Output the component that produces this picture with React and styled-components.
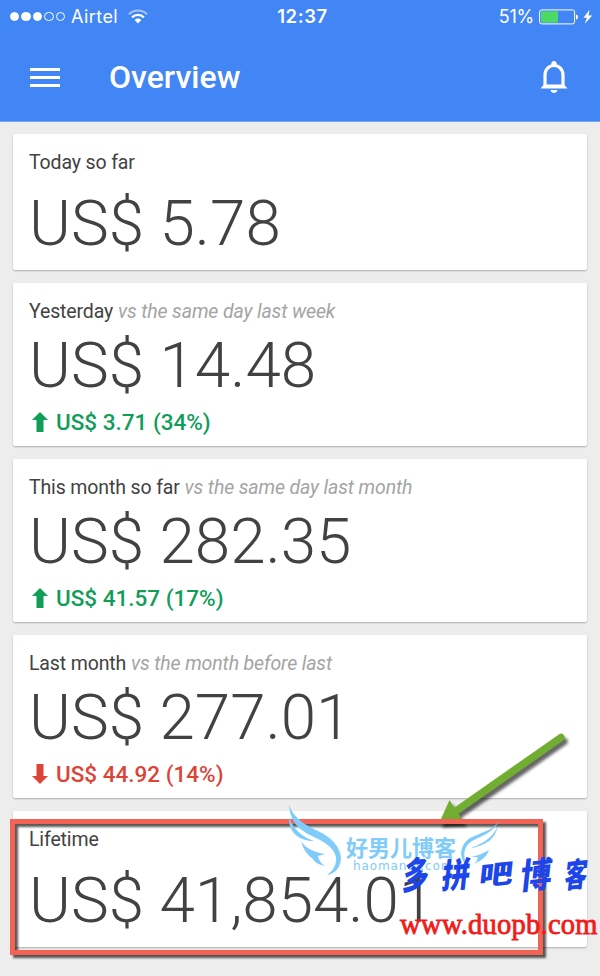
import React from 'react';
import styled, { createGlobalStyle } from 'styled-components';

const GlobalStyle = createGlobalStyle`
  * {
    box-sizing: border-box;
  }

  body {
    margin: 0;
    background: #ededed;
    font-family: Roboto, 'Noto Sans CJK SC', sans-serif;
    color: #424242;
  }
`;

const Screen = styled.div`
  position: relative;
  width: 600px;
  height: 976px;
  overflow: hidden;
  background: #ededed;
`;

const Header = styled.header`
  height: 122px;
  background: #4285f4;
  border-bottom: 1px solid #78a7f4;
  color: #fff;
`;

const StatusBar = styled.div`
  display: grid;
  grid-template-columns: 1fr auto 1fr;
  align-items: center;
  height: 33px;
  padding: 0 7px 0 10px;
  font: 400 18px/33px Inter, sans-serif;
`;

const StatusGroup = styled.div`
  display: flex;
  align-items: center;
  justify-content: ${(props) => (props.$end ? 'flex-end' : 'flex-start')};
`;

const Signal = styled.div`
  display: flex;
  gap: 2px;
  margin-right: 6px;
`;

const SignalDot = styled.span`
  width: 9.4px;
  height: 9.4px;
  border: 1px solid #fff;
  border-radius: 50%;
  background: ${(props) => (props.$filled ? '#fff' : 'transparent')};
`;

const Carrier = styled.span`
  margin-right: 10px;
  letter-spacing: 0.45px;
`;

const Clock = styled.span`
  margin-left: 2px;
  font-size: 18.5px;
  font-weight: 600;
  letter-spacing: 0.6px;
`;

const Percent = styled.span`
  margin-right: 5px;
  letter-spacing: -0.2px;
`;

const AppBar = styled.div`
  display: flex;
  align-items: center;
  height: 88px;
  padding: 0 32px 0 30px;
`;

const MenuIcon = styled.div`
  display: flex;
  flex-direction: column;
  gap: 5px;
  width: 30px;
  margin-right: 49px;
`;

const MenuLine = styled.span`
  height: 3px;
  background: #fff;
`;

const PageTitle = styled.h1`
  flex: 1;
  margin: 0 0 1px;
  font-size: 32px;
  font-weight: 500;
  line-height: 40px;
`;

const CardList = styled.main`
  display: flex;
  flex-direction: column;
  gap: 13px;
  padding: 12px 13px;
`;

const Card = styled.section`
  height: ${(props) => (props.$compact ? 136 : 163)}px;
  padding: 16.5px 16px 0;
  border-radius: 2px;
  background: #fff;
  box-shadow: 0 1px 2px rgba(0, 0, 0, 0.28);
`;

const CardTitle = styled.h2`
  margin: 0;
  font-size: 19.5px;
  font-weight: 400;
  line-height: 24px;
  letter-spacing: -0.13px;
  white-space: nowrap;
`;

const Comparison = styled.em`
  color: #a4a4a4;
`;

const Amount = styled.div`
  margin-top: ${(props) => (props.$compact ? 13.5 : 6.5)}px;
  font-size: 63.7px;
  font-weight: 300;
  line-height: 72px;
  white-space: nowrap;
`;

const Change = styled.div`
  display: flex;
  align-items: center;
  gap: 8px;
  margin: 7px 0 0 3px;
  color: ${(props) => (props.$down ? '#db4437' : '#0f9d58')};
  font-size: 22.5px;
  font-weight: 500;
  line-height: 26px;
`;

const ArrowIcon = styled.svg`
  width: 16px;
  height: 20px;
  transform: ${(props) => (props.$down ? 'rotate(180deg)' : 'none')};
`;

const Highlight = styled.div`
  position: absolute;
  left: 10px;
  top: 819px;
  width: 533px;
  height: 136px;
  border: 5px solid #f26255;
  filter: drop-shadow(3px 3px 1px rgba(0, 0, 0, 0.65));
`;

const Pointer = styled.svg`
  position: absolute;
  left: 420px;
  top: 720px;
  filter: drop-shadow(3px 4px 1.5px rgba(0, 0, 0, 0.6));
`;

const Wings = styled.svg`
  position: absolute;
  left: 280px;
  top: 795px;
`;

const Stamp = styled.div`
  position: absolute;
  left: 346px;
  top: 832px;
  width: 116px;
  color: #7fccfb;
  font: 700 22px/28px 'Noto Sans CJK SC', sans-serif;
  white-space: nowrap;
`;

const StampUrl = styled.div`
  margin-left: 7px;
  font: 400 12px/12px 'DejaVu Sans', sans-serif;
  letter-spacing: 0.9px;
`;

const BrushName = styled.div`
  position: absolute;
  left: 401px;
  top: 851px;
  display: flex;
  color: #1c45ea;
  font: 900 31px/44px 'Noto Sans CJK SC', sans-serif;
`;

const BrushChar = styled.span`
  width: 40px;
  transform: skewX(-12deg) rotate(-6deg)
    scale(${(props) => props.$wide}, ${(props) => props.$tall});
  transform-origin: 15px 50%;
`;

const SiteUrl = styled.div`
  position: absolute;
  left: 400px;
  top: 909px;
  color: #f11b1b;
  font: 400 28.5px/32px 'Liberation Serif', serif;
  letter-spacing: 0.25px;
  -webkit-text-stroke: 0.8px #f11b1b;
  white-space: nowrap;
`;

const cards = [
  { title: 'Today so far', amount: 'US$ 5.78' },
  {
    title: 'Yesterday',
    versus: 'vs the same day last week',
    amount: 'US$ 14.48',
    change: 'US$ 3.71 (34%)',
  },
  {
    title: 'This month so far',
    versus: 'vs the same day last month',
    amount: 'US$ 282.35',
    change: 'US$ 41.57 (17%)',
  },
  {
    title: 'Last month',
    versus: 'vs the month before last',
    amount: 'US$ 277.01',
    change: 'US$ 44.92 (14%)',
    down: true,
  },
  { title: 'Lifetime', amount: 'US$ 41,854.01' },
];

const brushChars = [
  { char: '多', wide: 0.82, tall: 1.2 },
  { char: '拼', wide: 0.9, tall: 1.12 },
  { char: '吧', wide: 1.08, tall: 0.86 },
  { char: '博', wide: 1, tall: 1.15 },
  { char: '客', wide: 0.72, tall: 1.08 },
];

function WifiIcon() {
  return (
    <svg width="20" height="15" viewBox="0 0 20 15" fill="none">
      <path d="M1 5.2a12.8 12.8 0 0 1 18 0" stroke="#a5c5fa" strokeWidth="2.2" />
      <path d="M4.1 8.4a8.3 8.3 0 0 1 11.8 0" stroke="#fff" strokeWidth="2.3" />
      <path d="M6.6 11a4.8 4.8 0 0 1 6.8 0L10 14.5z" fill="#fff" />
    </svg>
  );
}

function BatteryIcon() {
  return (
    <svg width="54" height="16" viewBox="0 0 54 16" fill="none">
      <rect x="0.6" y="0.9" width="35" height="14" rx="2" stroke="#fff" />
      <rect x="2" y="2.3" width="17" height="11.3" fill="#4cd964" />
      <path d="M37 5.5q2 0 2 2.5t-2 2.5z" fill="#fff" />
      <path d="M50.5 .8 44.5 8.7h3.4l-2.1 6 7.5-8.2h-3.8z" fill="#fff" />
    </svg>
  );
}

function BellIcon() {
  return (
    <svg width="28" height="34" viewBox="0 0 28 34" fill="none">
      <circle cx="14" cy="3.5" r="2.6" fill="#fff" />
      <path
        d="M5 27V15.2C5 9.5 9 5.5 14 5.5s9 4 9 9.7V27"
        stroke="#fff"
        strokeWidth="3.2"
      />
      <path d="M4 24.5h20l3.5 4H.5zM10.5 30h7q-.8 3-3.5 3t-3.5-3z" fill="#fff" />
    </svg>
  );
}

export default function App() {
  return (
    <Screen>
      <GlobalStyle />
      <Header>
        <StatusBar>
          <StatusGroup>
            <Signal>
              {[1, 2, 3, 4, 5].map((dot) => (
                <SignalDot key={dot} $filled={dot <= 3} />
              ))}
            </Signal>
            <Carrier>Airtel</Carrier>
            <WifiIcon />
          </StatusGroup>
          <Clock>12:37</Clock>
          <StatusGroup $end>
            <Percent>51%</Percent>
            <BatteryIcon />
          </StatusGroup>
        </StatusBar>
        <AppBar>
          <MenuIcon>
            <MenuLine />
            <MenuLine />
            <MenuLine />
          </MenuIcon>
          <PageTitle>Overview</PageTitle>
          <BellIcon />
        </AppBar>
      </Header>
      <CardList>
        {cards.map((card) => (
          <Card key={card.title} $compact={!card.change}>
            <CardTitle>
              {card.title} {card.versus && <Comparison>{card.versus}</Comparison>}
            </CardTitle>
            <Amount $compact={!card.change}>{card.amount}</Amount>
            {card.change && (
              <Change $down={card.down}>
                <ArrowIcon $down={card.down} viewBox="0 0 16 20">
                  <path d="M8 0l8 8h-4.5v12h-7V8H0z" fill="currentColor" />
                </ArrowIcon>
                {card.change}
              </Change>
            )}
          </Card>
        ))}
      </CardList>
      <Pointer width="160" height="110" viewBox="0 0 160 110">
        <path d="M141 17.5 36 91" stroke="#70ad30" strokeWidth="7.5" strokeLinecap="round" />
        <path d="M29.5 80 44 102.5 19 103.5z" fill="#70ad30" />
      </Pointer>
      <Highlight />
      <Wings width="230" height="90" viewBox="0 0 230 90" fill="#7fccfb">
        <path d="M9 10C14 24 27 31 38 36C51 42 61 52 61 64C60 73 55 79 47 80C53 76 57 69 56 62C54 53 45 47 34 42C20 36 10 27 9 10Z" />
        <path d="M9 22C13 34 22 42 34 46C20 46 8 38 9 22Z" />
        <path d="M21 46C26 54 34 57 45 59L38 61Q39 67 45 71Q35 69 33 64Q24 58 21 46Z" />
        <path d="M219 26C213 38 201 41 192 46C184 51 182 60 187 70C177 62 181 49 190 43C202 37 212 36 219 26Z" />
        <path d="M218 31C215 44 206 51 190 53C203 49 212 43 218 31Z" />
        <path d="M209 55C206 64 199 66 194 69Q199 64 197 62H191Q201 60 209 55Z" />
      </Wings>
      <Stamp>
        好男儿博客
        <StampUrl>haomaner.com</StampUrl>
      </Stamp>
      <BrushName>
        {brushChars.map(({ char, wide, tall }) => (
          <BrushChar key={char} $wide={wide} $tall={tall}>
            {char}
          </BrushChar>
        ))}
      </BrushName>
      <SiteUrl>www.duopb.com</SiteUrl>
    </Screen>
  );
}
